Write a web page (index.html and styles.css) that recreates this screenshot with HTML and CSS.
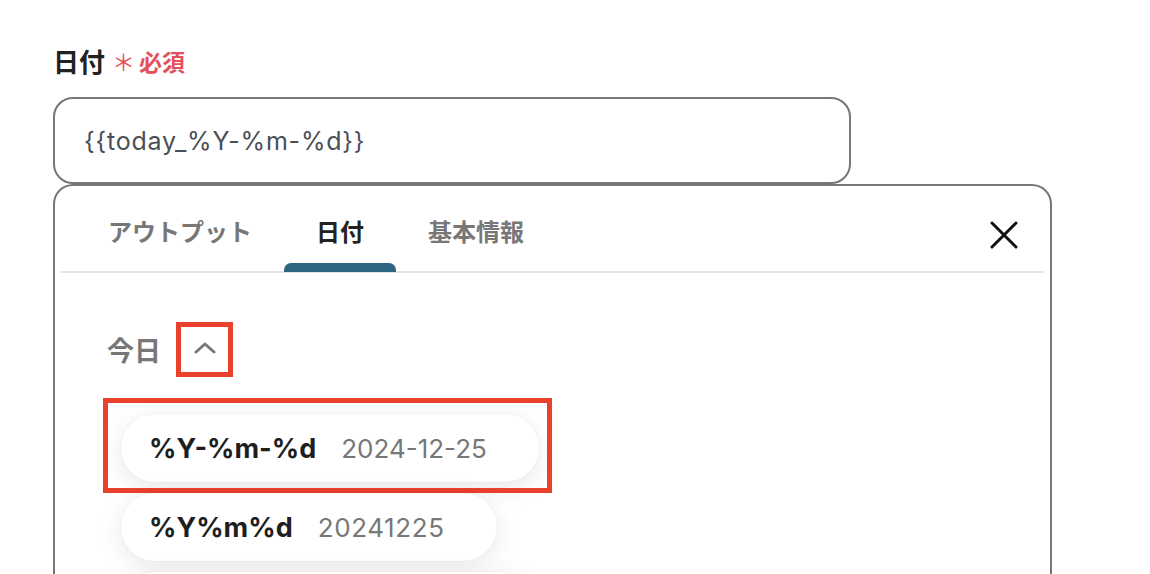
FILE: index.html
```html
<!DOCTYPE html>
<html lang="ja">
<head>
<meta charset="utf-8">
<link rel="stylesheet" href="styles.css">
</head>
<body>
<div class="page">
  <div class="field-label">
    <span class="label-text">日付</span>
    <span class="req"><span class="ast">＊</span>必須</span>
  </div>
  <div class="input">{{today_%Y-%m-%d}}</div>
  <div class="panel">
    <div class="tabs-row">
      <div class="tabs">
        <div class="tab">アウトプット</div>
        <div class="tab active">日付</div>
        <div class="tab">基本情報</div>
      </div>
      <div class="close">
        <svg width="28" height="28" viewBox="0 0 28 28"><path d="M2 2 L26 26 M26 2 L2 26" stroke="#111" stroke-width="3" stroke-linecap="round" fill="none"/></svg>
      </div>
    </div>
    <div class="section">
      <div class="section-head">
        <span class="section-title">今日</span>
        <span class="chev-box">
          <svg width="22" height="12" viewBox="0 0 22 12"><path d="M2 10 L11 2 L20 10" stroke="#777" stroke-width="3" fill="none" stroke-linecap="round" stroke-linejoin="round"/></svg>
        </span>
      </div>
      <div class="pills">
        <div class="pill-wrap marked">
          <div class="pill"><span class="code">%Y-%m-%d</span><span class="val">2024-12-25</span></div>
        </div>
        <div class="pill-wrap">
          <div class="pill"><span class="code">%Y%m%d</span><span class="val wide">20241225</span></div>
        </div>
        <div class="pill-wrap">
          <div class="pill pill-partial"></div>
        </div>
      </div>
    </div>
  </div>
</div>
</body>
</html>
```
FILE: styles.css
```css
* { box-sizing: border-box; }
html, body { margin: 0; padding: 0; background: #fff; }
body {
  font-family: "Noto Sans CJK JP", "Noto Sans", sans-serif;
  width: 1150px;
  height: 574px;
  overflow: hidden;
}
.page {
  padding: 45px 0 0 53px;
}
.field-label {
  display: flex;
  align-items: center;
  height: 32px;
  line-height: 32px;
}
.label-text {
  font-size: 26px;
  font-weight: 700;
  color: #222;
}
.req {
  display: flex;
  align-items: center;
  font-size: 23px;
  font-weight: 700;
  color: #e5505c;
  margin-left: 7px;
}
.ast {
  font-size: 23px;
  font-weight: 400;
  margin-right: 4px;
}
.input {
  margin-top: 20px;
  width: 798px;
  height: 87px;
  border: 2px solid #777;
  border-radius: 20px;
  display: flex;
  align-items: center;
  padding: 0 29px;
  font-family: Inter, "Noto Sans", sans-serif;
  font-size: 25px;
  letter-spacing: 0.8px;
  color: #4a4f57;
}
.panel {
  width: 999px;
  height: 420px;
  border: 2px solid #777;
  border-bottom: none;
  border-radius: 20px 20px 0 0;
}
.tabs-row {
  display: flex;
  justify-content: space-between;
  height: 87px;
  margin: 0 6px;
  border-bottom: 2px solid #e3e3e3;
  padding: 0 20px 0 15px;
}
.tabs {
  display: flex;
}
.tab {
  position: relative;
  padding: 29px 32px 0;
  height: 85px;
  line-height: 32px;
  font-size: 24px;
  font-weight: 700;
  color: #777;
}
.tab.active { color: #222; }
.tab.active::after {
  content: "";
  position: absolute;
  left: 0;
  right: 0;
  bottom: -1px;
  height: 9px;
  background: #2e6580;
  border-radius: 7px 7px 0 0;
}
.close {
  width: 40px;
  height: 40px;
  margin-top: 29px;
  display: flex;
  align-items: center;
  justify-content: center;
}
.section {
  padding-left: 52px;
}
.section-head {
  display: flex;
  align-items: center;
  margin-top: 49px;
  height: 55px;
}
.section-title {
  font-size: 27px;
  font-weight: 700;
  color: #777;
  line-height: 32px;
}
.chev-box {
  width: 57px;
  height: 55px;
  margin-left: 15px;
  border: 5px solid #e9412b;
  display: flex;
  align-items: center;
  justify-content: center;
  padding-bottom: 4px;
}
.pills {
  margin-top: 37px;
  margin-left: 14px;
  display: flex;
  flex-direction: column;
  align-items: flex-start;
  gap: 11px;
}
.pill-wrap { position: relative; }
.pill-wrap.marked::after {
  content: "";
  position: absolute;
  left: -18px;
  right: -13px;
  top: -16px;
  bottom: -11px;
  border: 5px solid #e9412b;
  pointer-events: none;
}
.pill {
  display: flex;
  align-items: center;
  height: 68px;
  padding: 0 52px 0 28px;
  border-radius: 34px;
  background: #fff;
  box-shadow: 0 0 0 1px rgba(0,0,0,0.025), 0 6px 26px rgba(0,0,0,0.09);
  font-family: Inter, "Noto Sans", sans-serif;
}
.pill-partial {
  width: 412px;
}
.code {
  font-size: 27px;
  font-weight: 700;
  color: #1e1e1e;
}
.val {
  margin-left: 25px;
  font-size: 26px;
  color: #777;
}
.val.wide {
  letter-spacing: 0.6px;
}
```
